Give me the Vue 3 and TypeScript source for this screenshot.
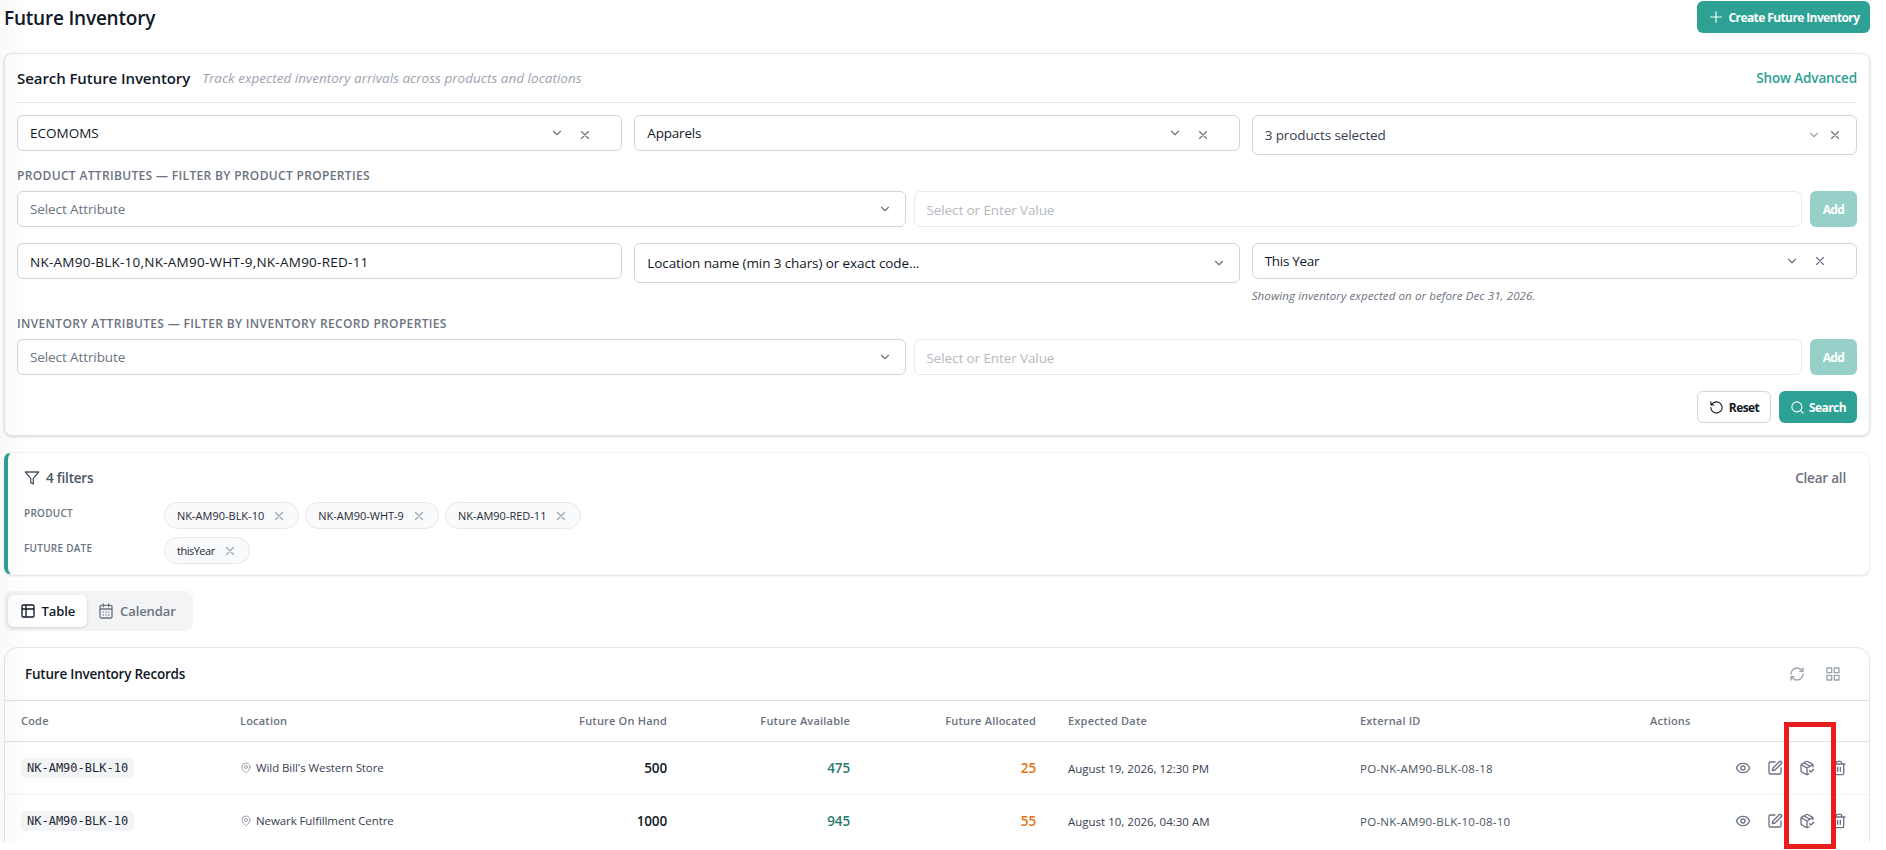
<script setup lang="ts">
import { ref } from "vue";
import type { Ref } from "vue";

interface FilterGroup {
  readonly label: string;
  readonly values: string[];
}

interface InventoryRecord {
  readonly id: number;
  readonly code: string;
  readonly location: string;
  readonly onHand: number;
  readonly available: number;
  readonly allocated: number;
  readonly expected: string;
  readonly externalId: string;
}

const view = ref("table");
const codes = ref("NK-AM90-BLK-10,NK-AM90-WHT-9,NK-AM90-RED-11");

const groups: Ref<FilterGroup[]> = ref([
  { label: "Product", values: ["NK-AM90-BLK-10", "NK-AM90-WHT-9", "NK-AM90-RED-11"] },
  { label: "Future Date", values: ["thisYear"] },
]);

const records: Ref<InventoryRecord[]> = ref([
  {
    id: 1,
    code: "NK-AM90-BLK-10",
    location: "Wild Bill's Western Store",
    onHand: 500,
    available: 475,
    allocated: 25,
    expected: "August 19, 2026, 12:30 PM",
    externalId: "PO-NK-AM90-BLK-08-18",
  },
  {
    id: 2,
    code: "NK-AM90-BLK-10",
    location: "Newark Fulfillment Centre",
    onHand: 1000,
    available: 945,
    allocated: 55,
    expected: "August 10, 2026, 04:30 AM",
    externalId: "PO-NK-AM90-BLK-10-08-10",
  },
]);

// 24x24 stroke icons
const icons: Record<string, string> = {
  plus: "M4 12h16M12 4v16",
  chevron: "m6 9 6 6 6-6",
  x: "M18 6 6 18M6 6l12 12",
  reset: "M3 12a9 9 0 1 0 9-9 9.75 9.75 0 0 0-6.74 2.74L3 8M3 3v5h5",
  search: "M19 11a8 8 0 1 1-16 0 8 8 0 0 1 16 0ZM21 21l-4.3-4.3",
  filter: "M22 3H2l8 9.46V19l4 2v-8.54L22 3Z",
  table: "M5 3h14a2 2 0 0 1 2 2v14a2 2 0 0 1-2 2H5a2 2 0 0 1-2-2V5a2 2 0 0 1 2-2ZM3 9h18M9 3v18",
  calendar:
    "M8 1.5v4M16 1.5v4M5 3.5h14a2 2 0 0 1 2 2v15a2 2 0 0 1-2 2H5a2 2 0 0 1-2-2v-15a2 2 0 0 1 2-2ZM3 9h18M8 13.5h.01M12 13.5h.01M16 13.5h.01M8 18h.01M12 18h.01M16 18h.01",
  refresh:
    "M3 12a9 9 0 0 1 9-9 9.75 9.75 0 0 1 6.74 2.74L21 8M21 3v5h-5M21 12a9 9 0 0 1-9 9 9.75 9.75 0 0 1-6.74-2.74L3 16M8 16H3v5",
  grid: "M3 3h7v7H3ZM14 3h7v7h-7ZM14 14h7v7h-7ZM3 14h7v7H3Z",
  pin: "M20 10c0 6-8 12-8 12s-8-6-8-12a8 8 0 0 1 16 0ZM15 10a3 3 0 1 1-6 0 3 3 0 0 1 6 0Z",
  eye: "M2 12s3-7 10-7 10 7 10 7-3 7-10 7-10-7-10-7ZM15 12a3 3 0 1 1-6 0 3 3 0 0 1 6 0Z",
  edit: "M12 3H5a2 2 0 0 0-2 2v14a2 2 0 0 0 2 2h14a2 2 0 0 0 2-2v-7M18.38 2.62a2.12 2.12 0 0 1 3 3L12 15l-4 1 1-4Z",
  box: "m16 16 2 2 4-4M21 10V8a2 2 0 0 0-1-1.73l-7-4a2 2 0 0 0-2 0l-7 4A2 2 0 0 0 3 8v8a2 2 0 0 0 1 1.73l7 4a2 2 0 0 0 2 0l2-1.14M7.5 4.27l9 5.15M3.29 7 12 12l8.71-5M12 22V12",
  trash:
    "M3 6h18M19 6v14a2 2 0 0 1-2 2H7a2 2 0 0 1-2-2V6M8 6V4a2 2 0 0 1 2-2h4a2 2 0 0 1 2 2v2M10 11v6M14 11v6",
};

const actions = ["eye", "edit", "box", "trash"];

function removeValue(group: FilterGroup, value: string): void {
  groups.value = groups.value.map((g) =>
    g.label === group.label ? { ...g, values: g.values.filter((v) => v !== value) } : g
  );
}
</script>

<template>
  <div class="page">
    <header class="topbar">
      <h1>Future Inventory</h1>
      <button class="btn primary create">
        <svg class="icon" viewBox="0 0 24 24"><path :d="icons.plus" /></svg>
        <span>Create Future Inventory</span>
      </button>
    </header>

    <section class="card search-card">
      <div class="search-head">
        <h2>Search Future Inventory</h2>
        <span class="subtitle">Track expected inventory arrivals across products and locations</span>
        <a class="advanced">Show Advanced</a>
      </div>

      <div class="row three first">
        <div class="field clearable">
          <span class="value brand">ECOMOMS</span>
          <svg class="icon chev" viewBox="0 0 24 24"><path :d="icons.chevron" /></svg>
          <svg class="icon clear low" viewBox="0 0 24 24"><path :d="icons.x" /></svg>
        </div>
        <div class="field clearable">
          <span class="value apparels">Apparels</span>
          <svg class="icon chev" viewBox="0 0 24 24"><path :d="icons.chevron" /></svg>
          <svg class="icon clear low" viewBox="0 0 24 24"><path :d="icons.x" /></svg>
        </div>
        <div class="field tall products">
          <span class="value">3 products selected</span>
          <svg class="icon chev" viewBox="0 0 24 24"><path :d="icons.chevron" /></svg>
          <svg class="icon clear" viewBox="0 0 24 24"><path :d="icons.x" /></svg>
        </div>
      </div>

      <p class="group-label">Product Attributes — Filter by product properties</p>
      <div class="row attr">
        <div class="field">
          <span class="value muted">Select Attribute</span>
          <svg class="icon chev" viewBox="0 0 24 24"><path :d="icons.chevron" /></svg>
        </div>
        <div class="field disabled"><span class="value">Select or Enter Value</span></div>
        <button class="btn add" disabled>Add</button>
      </div>

      <div class="row three second">
        <div class="field codes-field"><span class="value codes">{{ codes }}</span></div>
        <div class="field tall">
          <span class="value">Location name (min 3 chars) or exact code...</span>
          <svg class="icon chev" viewBox="0 0 24 24"><path :d="icons.chevron" /></svg>
        </div>
        <div>
          <div class="field clearable">
            <span class="value year">This Year</span>
            <svg class="icon chev" viewBox="0 0 24 24"><path :d="icons.chevron" /></svg>
            <svg class="icon clear" viewBox="0 0 24 24"><path :d="icons.x" /></svg>
          </div>
          <p class="hint">Showing inventory expected on or before Dec 31, 2026.</p>
        </div>
      </div>

      <p class="group-label">Inventory Attributes — Filter by inventory record properties</p>
      <div class="row attr">
        <div class="field">
          <span class="value muted">Select Attribute</span>
          <svg class="icon chev" viewBox="0 0 24 24"><path :d="icons.chevron" /></svg>
        </div>
        <div class="field disabled"><span class="value">Select or Enter Value</span></div>
        <button class="btn add" disabled>Add</button>
      </div>

      <div class="buttons">
        <button class="btn reset">
          <svg class="icon" viewBox="0 0 24 24"><path :d="icons.reset" /></svg>
          <span>Reset</span>
        </button>
        <button class="btn primary find">
          <svg class="icon" viewBox="0 0 24 24"><path :d="icons.search" /></svg>
          <span>Search</span>
        </button>
      </div>
    </section>

    <section class="card filters">
      <div class="filters-head">
        <svg class="icon" viewBox="0 0 24 24"><path :d="icons.filter" /></svg>
        <span class="count">4 filters</span>
        <a class="clear-all">Clear all</a>
      </div>
      <div class="filter-row" v-for="group in groups" :key="group.label">
        <span class="filter-label">{{ group.label }}</span>
        <span class="chip" v-for="value in group.values" :key="value">
          {{ value }}
          <svg class="icon" viewBox="0 0 24 24" @click="removeValue(group, value)"><path :d="icons.x" /></svg>
        </span>
      </div>
    </section>

    <div class="tabs">
      <button class="tab" :class="{ active: view === 'table' }" @click="view = 'table'">
        <svg class="icon" viewBox="0 0 24 24"><path :d="icons.table" /></svg>
        <span>Table</span>
      </button>
      <button class="tab" :class="{ active: view === 'calendar' }" @click="view = 'calendar'">
        <svg class="icon" viewBox="0 0 24 24"><path :d="icons.calendar" /></svg>
        <span>Calendar</span>
      </button>
    </div>

    <section class="card records">
      <div class="records-head">
        <h3>Future Inventory Records</h3>
        <svg class="icon" viewBox="0 0 24 24"><path :d="icons.refresh" /></svg>
        <svg class="icon" viewBox="0 0 24 24"><path :d="icons.grid" /></svg>
      </div>
      <div class="grid thead">
        <span>Code</span>
        <span>Location</span>
        <span class="num">Future On Hand</span>
        <span class="num">Future Available</span>
        <span class="num">Future Allocated</span>
        <span>Expected Date</span>
        <span>External ID</span>
        <span>Actions</span>
      </div>
      <div class="grid tr" v-for="record in records" :key="record.id">
        <span><code>{{ record.code }}</code></span>
        <span class="location">
          <svg class="icon" viewBox="0 0 24 24"><path :d="icons.pin" /></svg>
          {{ record.location }}
        </span>
        <span class="num">{{ record.onHand }}</span>
        <span class="num available">{{ record.available }}</span>
        <span class="num allocated">{{ record.allocated }}</span>
        <span class="date">{{ record.expected }}</span>
        <span class="ext">{{ record.externalId }}</span>
        <span class="actions">
          <svg class="icon" viewBox="0 0 24 24" v-for="name in actions" :key="name"><path :d="icons[name]" /></svg>
        </span>
      </div>
    </section>

    <div class="edge"></div>
    <div class="highlight"></div>
  </div>
</template>

<style>
body {
  background: #fff;
}
</style>

<style scoped>
.page {
  position: relative;
  box-sizing: border-box;
  height: 850px;
  padding: 1px 16px 8px 4px;
  overflow: hidden;
  display: flex;
  flex-direction: column;
  font-family: "Open Sans", "Noto Sans", sans-serif;
  font-size: 13px;
  color: #111827;
}

.page * {
  box-sizing: border-box;
}

h1,
h2,
h3,
p {
  margin: 0;
  font-weight: 600;
  white-space: nowrap;
}

.icon {
  flex: none;
  width: 16px;
  height: 16px;
  fill: none;
  stroke: currentColor;
  stroke-width: 2;
  stroke-linecap: round;
  stroke-linejoin: round;
}

.topbar {
  display: flex;
  justify-content: space-between;
  height: 52px;
  flex: none;
}

h1 {
  font-size: 19px;
  line-height: 35px;
  letter-spacing: -0.2px;
}

.btn {
  display: flex;
  align-items: center;
  justify-content: center;
  height: 32px;
  padding: 1px 0 0;
  border: none;
  border-radius: 6px;
  font-family: inherit;
  font-size: 12px;
  font-weight: 700;
  letter-spacing: -0.6px;
  white-space: nowrap;
}

.btn .icon {
  width: 15px;
  height: 15px;
  margin-top: -1px;
  stroke-width: 1.7;
}

.primary {
  background: #2da194;
  color: #fff;
}

.create {
  width: 173px;
  gap: 5px;
}

.create .icon {
  width: 16px;
  height: 16px;
}

.card {
  flex: none;
  border: 1px solid #e5e7eb;
  border-radius: 8px;
  background: #fff;
  box-shadow: 0 1px 2px rgba(0, 0, 0, 0.12);
}

.search-card {
  height: 383px;
  padding: 0 12px;
  box-shadow: 0 1px 3px rgba(0, 0, 0, 0.16);
}

.search-head {
  display: flex;
  align-items: center;
  height: 49px;
  border-bottom: 1px solid #e5e7eb;
}

h2 {
  font-size: 15px;
  letter-spacing: -0.07px;
}

.subtitle {
  margin-left: 12px;
  font-size: 13.5px;
  font-style: italic;
  color: #9ca3af;
  letter-spacing: 0.02px;
}

.advanced {
  margin-left: auto;
  font-size: 13.5px;
  font-weight: 600;
  color: #2da194;
  letter-spacing: -0.14px;
}

.row {
  display: grid;
  align-items: start;
}

.three {
  grid-template-columns: repeat(3, minmax(0, 1fr));
  gap: 12px;
}

.first {
  margin-top: 12px;
}

.attr {
  grid-template-columns: 1fr 1fr 47px;
  gap: 8px;
}

.second {
  margin-top: 16px;
}

.field {
  display: flex;
  align-items: center;
  height: 36px;
  padding: 0 13px 0 12px;
  border: 1px solid #d1d5db;
  border-radius: 6px;
  font-size: 13.5px;
  white-space: nowrap;
}

.tall {
  height: 40px;
}

.field .value {
  flex: 1;
  letter-spacing: -0.1px;
}

.field .brand {
  letter-spacing: 0;
}

.field .apparels {
  letter-spacing: -0.2px;
}

.codes-field {
  padding-top: 1px;
}

.field .codes {
  letter-spacing: 0.25px;
}

.field .year {
  letter-spacing: -0.3px;
}

.field .icon {
  width: 14px;
  height: 14px;
  color: #6b7280;
}

.clearable {
  padding-right: 29px;
}

.clearable .clear {
  margin-left: 14px;
}

.clear.low {
  margin-top: 4px;
}

.products {
  padding-right: 14px;
  color: #374151;
}

.products .chev {
  color: #9ca3af;
}

.products .clear {
  margin-left: 7px;
}

.muted {
  color: #6b7280;
}

.disabled {
  padding-top: 2px;
  border-color: #e8eaed;
  color: #b5b9c0;
}

.add {
  height: 36px;
  background: #96d0c9;
  color: #fff;
}

.group-label {
  margin-top: 12px;
  height: 24px;
  line-height: 18px;
  font-size: 12px;
  font-weight: 600;
  text-transform: uppercase;
  color: #6b7280;
  letter-spacing: 0.34px;
}

.hint {
  height: 24px;
  padding-top: 8px;
  font-size: 11.5px;
  line-height: 18px;
  font-style: italic;
  font-weight: 400;
  color: #6b7280;
  letter-spacing: 0.11px;
}

.buttons {
  display: flex;
  justify-content: flex-end;
  gap: 8px;
  margin-top: 16px;
}

.reset {
  width: 74px;
  gap: 5px;
  border: 1px solid #d1d5db;
  background: #fff;
  color: #111827;
}

.find {
  width: 78px;
  gap: 4px;
}

.filters {
  height: 123px;
  margin-top: 16px;
  padding: 14px 23px 0 16px;
  border-color: #f3f4f6;
  border-left: 4px solid #2da194;
}

.filters-head {
  display: flex;
  align-items: center;
  height: 22px;
  margin-bottom: 13px;
  font-size: 13.5px;
  font-weight: 600;
  color: #4b5563;
  letter-spacing: -0.2px;
}

.count {
  margin-left: 6px;
}

.clear-all {
  margin-left: auto;
  color: #6b7280;
}

.filter-row {
  display: flex;
  align-items: center;
  height: 27px;
  margin-bottom: 8px;
}

.filter-label {
  width: 140px;
  margin-top: -5px;
  font-size: 10px;
  font-weight: 600;
  text-transform: uppercase;
  color: #6b7280;
  letter-spacing: 0.25px;
}

.chip {
  display: flex;
  align-items: center;
  gap: 8px;
  height: 27px;
  margin-right: 6px;
  padding: 0 12px;
  border: 1px solid #e5e7eb;
  border-radius: 14px;
  background: #f9fafb;
  font-size: 11px;
  color: #1f2937;
}

.filter-row:last-child .chip {
  letter-spacing: -0.5px;
}

.chip .icon {
  width: 14px;
  height: 14px;
  color: #9ca3af;
}

.tabs {
  flex: none;
  align-self: flex-start;
  display: flex;
  width: 189px;
  height: 40px;
  margin: 16px 0;
  padding: 4px;
  border-radius: 8px;
  background: #f3f4f6;
}

.tab {
  display: flex;
  align-items: center;
  gap: 6px;
  height: 32px;
  padding: 0 11.5px;
  border: none;
  border-radius: 6px;
  background: transparent;
  font-family: inherit;
  font-size: 13px;
  font-weight: 600;
  color: #6b7280;
  letter-spacing: -0.1px;
}

.tab.active {
  background: #fff;
  color: #111827;
  box-shadow: 0 1px 3px rgba(0, 0, 0, 0.15);
}

.records {
  height: 195px;
  border-bottom: none;
  border-radius: 14px 14px 0 0;
  box-shadow: none;
  overflow: hidden;
}

.records-head {
  display: flex;
  align-items: center;
  height: 53px;
  padding: 0 28px 0 20px;
  border-bottom: 1px solid #e0e2e5;
}

.records-head .icon {
  margin-left: 20px;
  color: #9ca3af;
}

h3 {
  flex: 1;
  font-size: 13.5px;
  letter-spacing: -0.22px;
}

.grid {
  display: grid;
  grid-template-columns: 219px 225px 202px 183px 186px 324px 290px 219px;
  align-items: center;
  padding-left: 16px;
  white-space: nowrap;
}

.num {
  text-align: right;
}

.num + span:not(.num) {
  padding-left: 32px;
}

.thead {
  height: 41px;
  padding-bottom: 2px;
  border-bottom: 1px solid #e0e2e5;
  font-size: 11px;
  font-weight: 600;
  color: #6b7280;
  letter-spacing: 0.2px;
}

.tr {
  height: 53px;
  border-bottom: 1px solid #f3f4f6;
  font-size: 11.5px;
  color: #374151;
}

.tr .num {
  padding-bottom: 1px;
  font-size: 13.5px;
  font-weight: 600;
  color: #111827;
  letter-spacing: -0.15px;
}

.tr .available {
  color: #2a7a6d;
}

.tr .allocated {
  color: #dd7415;
}

.tr .ext {
  color: #4b5563;
  letter-spacing: 0.26px;
}

code {
  display: inline-block;
  height: 20px;
  padding: 0 6px;
  border-radius: 5px;
  background: #f3f4f6;
  font-family: "DejaVu Sans Mono", monospace;
  font-size: 12px;
  line-height: 20px;
  color: #1f2937;
}

.location {
  display: flex;
  align-items: center;
  gap: 4px;
  padding-bottom: 1px;
  letter-spacing: -0.09px;
}

.location .icon {
  width: 12px;
  height: 12px;
  color: #9ca3af;
}

.actions {
  display: flex;
  gap: 16px;
  padding-left: 85px;
  color: #6b7280;
}

/* soft shade cast on the left side of the page */
.edge {
  position: absolute;
  top: 0;
  left: 0;
  width: 32px;
  height: 842px;
  background: linear-gradient(to right, rgba(0, 0, 0, 0.025), rgba(0, 0, 0, 0));
  pointer-events: none;
}

.highlight {
  position: absolute;
  top: 722px;
  left: 1784px;
  width: 52px;
  height: 127px;
  border: 5px solid #e81e1e;
  pointer-events: none;
}
</style>
